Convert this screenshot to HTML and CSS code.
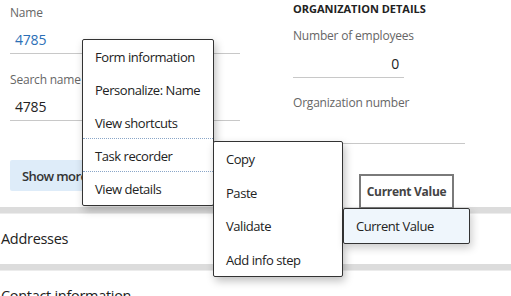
FILE: index.html
```html
<!DOCTYPE html>
<html lang="en">
<head>
<meta charset="UTF-8">
<meta name="viewport" content="width=device-width, initial-scale=1.0">
<title>Organization</title>
<link rel="stylesheet" href="styles.css">
</head>
<body>

<div class="page">
    <div class="columns">
        <div class="col-left">
            <div class="field">
                <div class="field-label">Name</div>
                <div class="field-value link">4785</div>
            </div>
            <div class="field">
                <div class="field-label">Search name</div>
                <div class="field-value">4785</div>
            </div>
            <button class="show-more">Show more</button>
        </div>
        <div class="col-right">
            <div class="group-title">ORGANIZATION DETAILS</div>
            <div class="field short">
                <div class="field-label">Number of employees</div>
                <div class="field-value number">0</div>
            </div>
            <div class="field wide">
                <div class="field-label">Organization number</div>
                <div class="field-value">&nbsp;</div>
            </div>
            <button class="current-value">Current Value</button>
        </div>
    </div>

    <div class="section-bar"></div>
    <div class="section-title">Addresses</div>
    <div class="section-bar"></div>
    <div class="section-title">Contact information</div>
</div>

<!-- context menu opened on the Name field -->
<ul class="menu main-menu">
    <li>Form information</li>
    <li>Personalize: Name</li>
    <li class="sep-after">View shortcuts</li>
    <li class="sep-after">Task recorder</li>
    <li>View details</li>
</ul>

<ul class="menu sub-menu">
    <li>Copy</li>
    <li>Paste</li>
    <li>Validate</li>
    <li>Add info step</li>
</ul>

<div class="value-popup">Current Value</div>

</body>
</html>
```

FILE: styles.css
```css
body {
  margin: 0;
  font-family: "Open Sans", "Noto Sans", sans-serif;
  color: #222;
  background: #fff;
  overflow: hidden;
}
.page {
  width: 511px;
}
.columns {
  display: flex;
}
.col-left {
  width: 230px;
  padding-left: 10px;
  padding-top: 5px;
  padding-bottom: 16px;
}
.col-right {
  padding-left: 53px;
  padding-top: 2px;
  width: 172px;
}
.field {
  margin-bottom: 18px;
}
.field-label {
  font-size: 12px;
  line-height: 16px;
  color: #666;
  letter-spacing: -0.2px;
  white-space: nowrap;
}
.field-value {
  font-size: 14px;
  line-height: 20px;
  padding: 9px 0 3px 5px;
  border-bottom: 1px solid #c8c8c8;
  letter-spacing: -0.2px;
}
.field-value.link {
  color: #2b6fb6;
}
.field.short {
  width: 111px;
  margin-bottom: 17px;
}
.field.short .field-value {
  text-align: right;
  padding-right: 5px;
  padding-top: 10px;
}
.field.wide .field-value {
  padding-top: 9px;
}
.field.wide {
  margin-bottom: 30px;
}
.group-title {
  font-size: 11px;
  font-weight: 700;
  line-height: 14px;
  color: #222;
  margin-bottom: 12px;
}
.show-more {
  display: block;
  margin-top: 39px;
  height: 31px;
  width: 110px;
  border: none;
  border-radius: 2px;
  background: #deecf9;
  color: #333;
  font-family: inherit;
  font-size: 13px;
  font-weight: 600;
  text-align: left;
  padding-left: 12px;
  letter-spacing: -0.6px;
}
.current-value {
  display: block;
  margin-left: 66px;
  margin-bottom: -2px;
  height: 35px;
  width: 95px;
  border: 2px solid #7a7a7a;
  background: #fff;
  color: #444;
  font-family: inherit;
  font-size: 12px;
  font-weight: 700;
  letter-spacing: -0.3px;
  padding: 0;
  position: relative;
}
.section-bar {
  height: 6px;
  background: #dcdcdc;
  border-bottom: 1px solid #ececec;
}
.section-title {
  font-size: 14.5px;
  line-height: 20px;
  padding: 15px 0 15px 1px;
  letter-spacing: -0.3px;
  white-space: nowrap;
}
.menu {
  position: absolute;
  margin: 0;
  padding: 0;
  list-style: none;
  background: #fff;
  border: 1px solid #333;
  border-radius: 2px;
  box-shadow: 2px 4px 8px rgba(0, 0, 0, 0.25);
  font-size: 13px;
  color: #222;
  letter-spacing: -0.45px;
}
.menu li {
  height: 33px;
  line-height: 34px;
  padding-left: 12px;
  white-space: nowrap;
}
.menu li.sep-after {
  border-bottom: 1px dotted #8aa6c8;
  height: 32px;
}
.main-menu {
  left: 82px;
  top: 39px;
  width: 130px;
}
.sub-menu {
  left: 213px;
  top: 141px;
  width: 128px;
}
.sub-menu li {
  height: 33.5px;
}
.value-popup {
  position: absolute;
  left: 343px;
  top: 208px;
  width: 113px;
  height: 34px;
  line-height: 34px;
  padding-left: 12px;
  background: #eff6fc;
  border: 1px solid #333;
  border-radius: 2px;
  box-shadow: 2px 4px 8px rgba(0, 0, 0, 0.2);
  font-size: 13px;
  letter-spacing: -0.45px;
}
```
